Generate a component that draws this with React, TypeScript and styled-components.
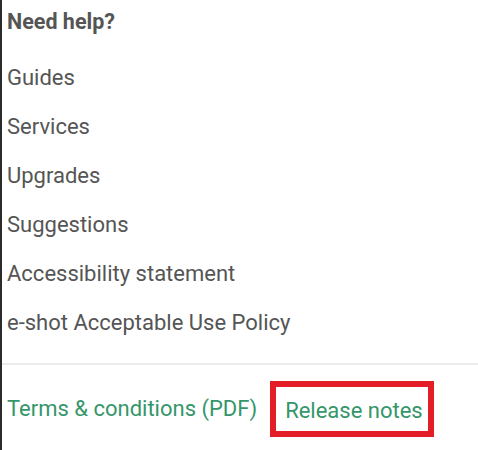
import React from "react";
import styled, { createGlobalStyle } from "styled-components";

const GlobalStyle = createGlobalStyle`
  html, body {
    margin: 0;
    padding: 0;
    background: #ffffff;
  }
  body {
    font-family: Roboto, "Liberation Sans", Arial, sans-serif;
  }
`;

const Panel = styled.div`
  box-sizing: border-box;
  width: 478px;
  height: 450px;
  border-left: 2px solid #2b2b2b;
  padding-top: 10px;
  background: #ffffff;
  overflow: hidden;
`;

const Heading = styled.h3`
  margin: 0 0 19px 0;
  padding-left: 5px;
  font-size: 21.5px;
  line-height: 24px;
  font-weight: 700;
  color: #555555;
`;

const List = styled.ul`
  list-style: none;
  margin: 0;
  padding: 0 0 0 5px;
`;

const Item = styled.li`
  font-size: 22px;
  line-height: 49px;
  color: #555555;
`;

const Divider = styled.hr`
  margin: 16px 0 0 0;
  border: 0;
  height: 2px;
  background: #ececec;
`;

const Footer = styled.div`
  display: flex;
  align-items: center;
  gap: 13px;
  padding: 16px 0 0 5px;
`;

const GreenLink = styled.a`
  font-size: 22px;
  color: #35966a;
  text-decoration: none;
  line-height: 40px;
`;

const Highlight = styled.span`
  display: inline-block;
  border: 6px solid #e41e26;
  padding: 4px 5px 0 9px;
`;

const links = [
  "Guides",
  "Services",
  "Upgrades",
  "Suggestions",
  "Accessibility statement",
  "e-shot Acceptable Use Policy",
];

export default function App() {
  return (
    <>
      <GlobalStyle />
      <Panel>
        <Heading>Need help?</Heading>
        <List>
          {links.map((l) => (
            <Item key={l}>{l}</Item>
          ))}
        </List>
        <Divider />
        <Footer>
          <GreenLink href="#">Terms &amp; conditions (PDF)</GreenLink>
          <Highlight>
            <GreenLink href="#">Release notes</GreenLink>
          </Highlight>
        </Footer>
      </Panel>
    </>
  );
}
